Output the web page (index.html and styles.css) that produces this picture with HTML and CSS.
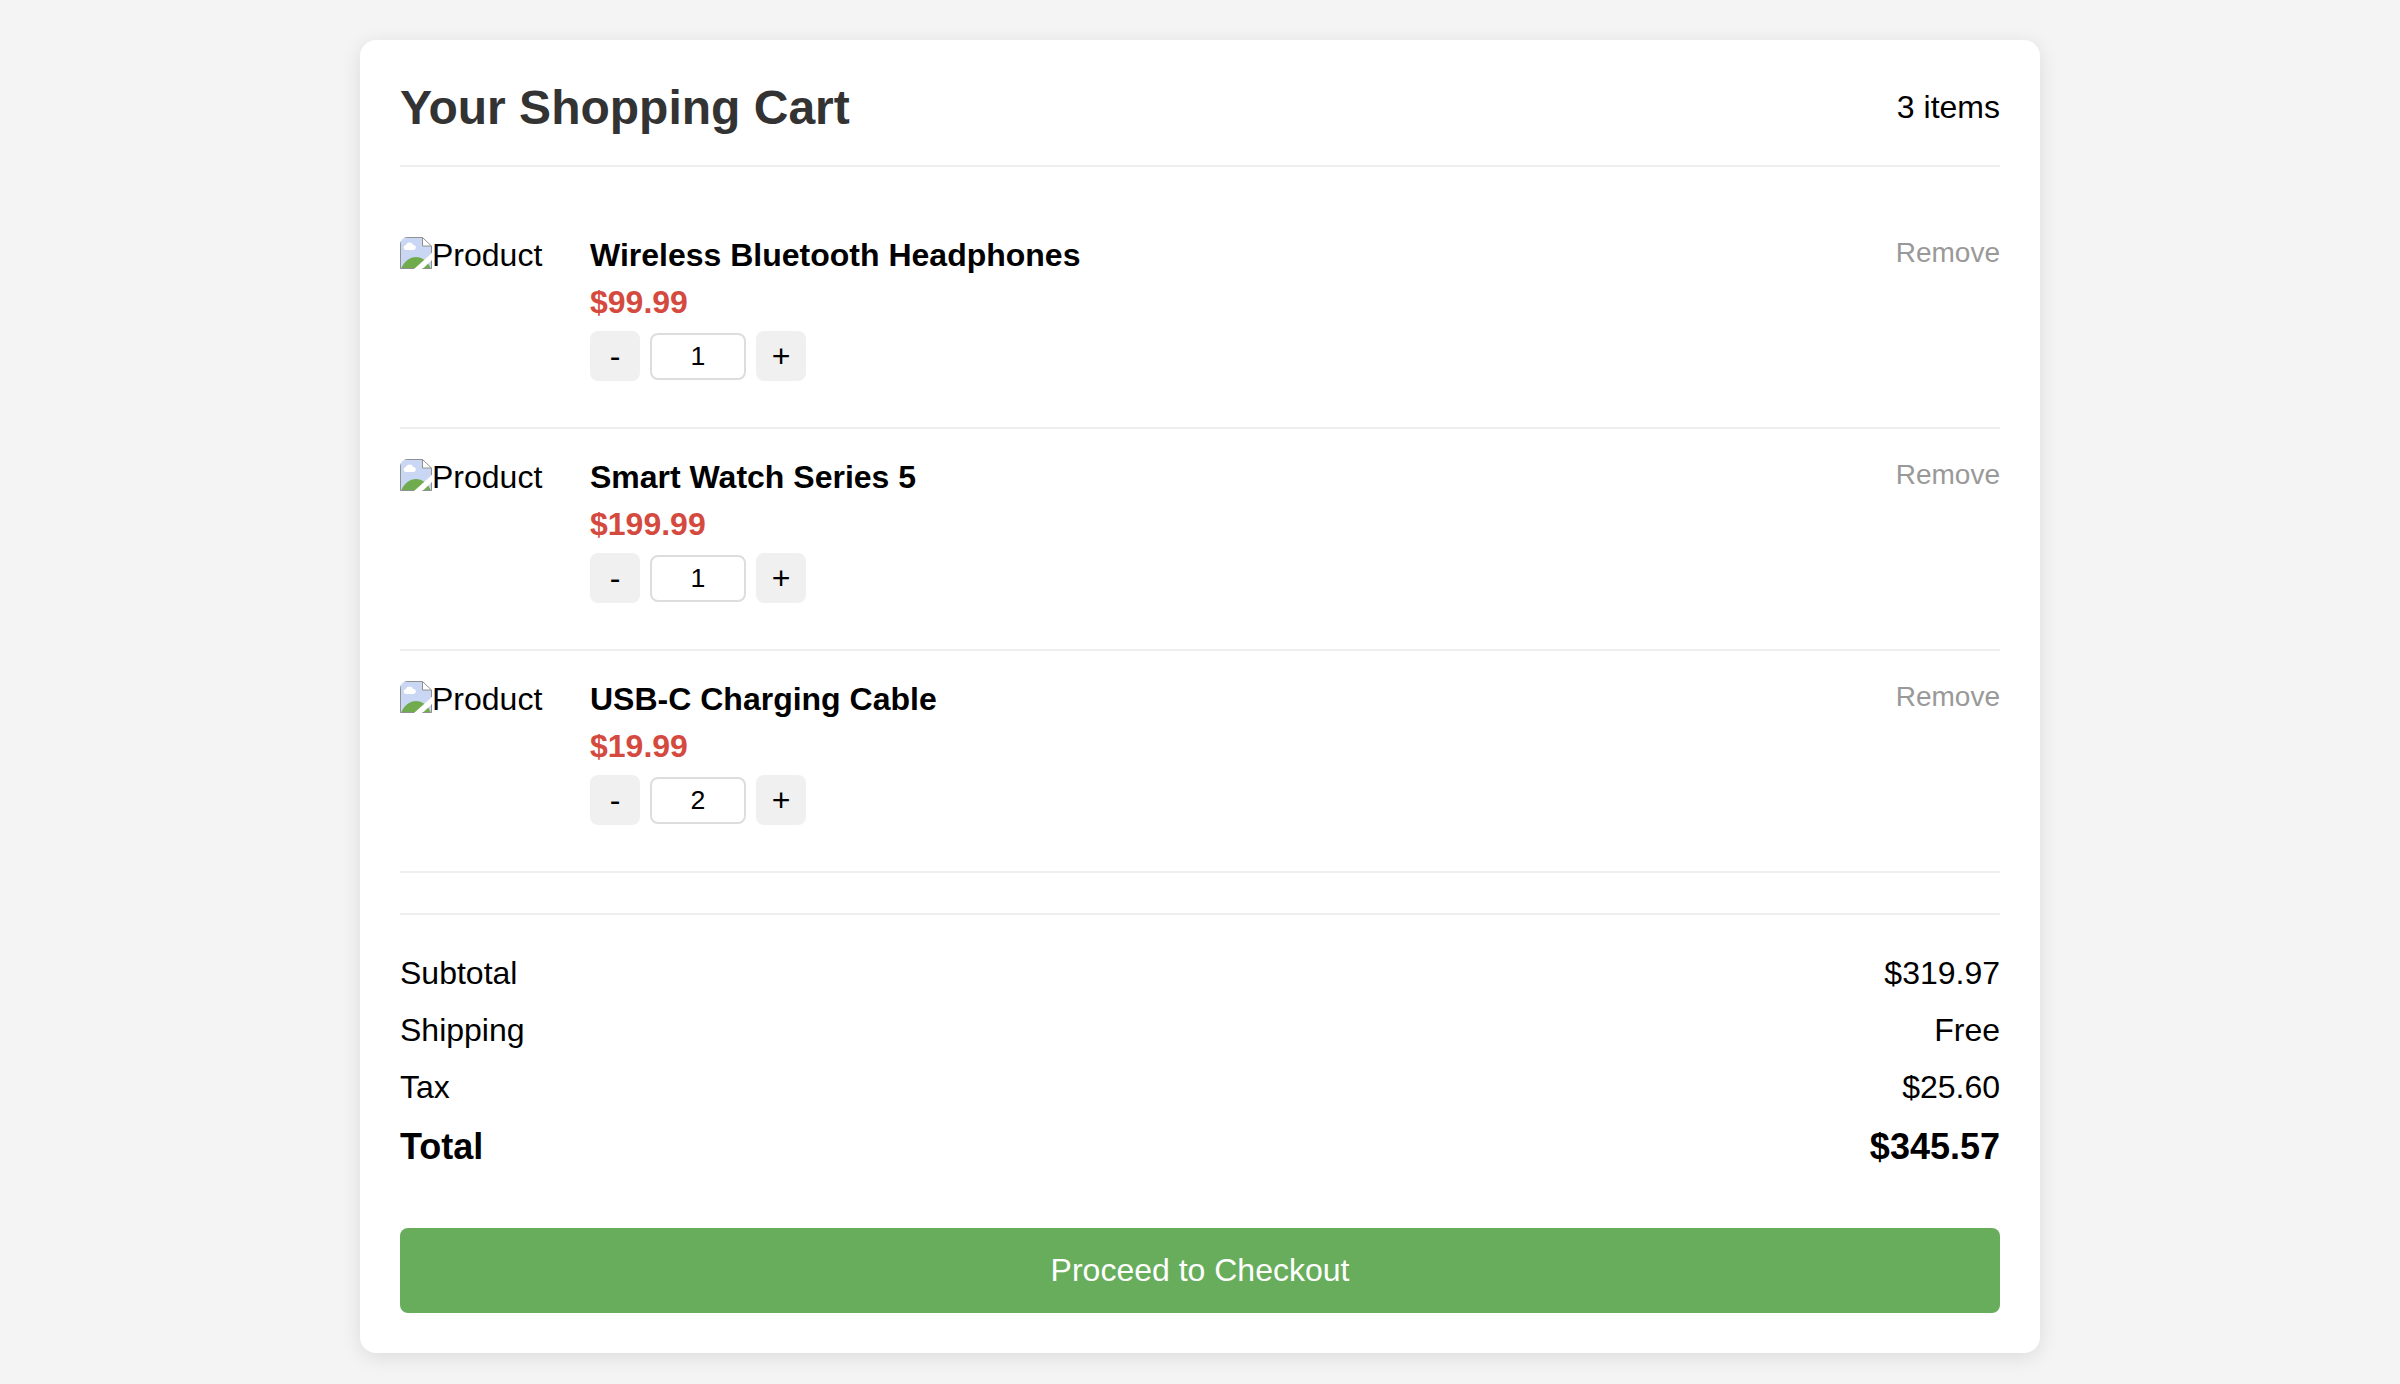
FILE: index.html
```html
<!DOCTYPE html>
<html lang="en">
<head>
<meta charset="utf-8">
<title>Your Shopping Cart</title>
<link rel="stylesheet" href="styles.css">
</head>
<body>
<svg class="sprite" aria-hidden="true">
  <symbol id="picture" viewBox="0 0 32 32">
    <path d="M0 0H22L32 10V32H0Z" fill="#c9d7f4"/>
    <path d="M5.500 13a2.600 2.600 0 0 1 .4-5.100a4 4 0 0 1 7.300 0a2.600 2.600 0 0 1 .8 5.100Z" fill="#fff"/>
    <path d="M1 32C4 24 10 20 16 20C22 20 28 24 31 32Z" fill="#70ac4d"/>
    <path d="M32 16V23L22.500 32H14Z" fill="#fff"/>
    <path d="M22.500 .5V9H31.500Z" fill="#fff"/>
    <path d="M14 31.500H.5V.5H22.500L31.500 9V16M22.500 .5V9H31.500M31.500 23.500V31.500H22.500" fill="none" stroke="#909090"/>
  </symbol>
</svg>
<main class="cart">
  <header class="cart-header">
    <h1>Your Shopping Cart</h1>
    <span>3 items</span>
  </header>
  <section class="items">
    <article class="item">
      <div class="thumb"><svg class="icon"><use href="#picture"/></svg><span>Product</span></div>
      <div class="details">
        <div class="name">Wireless Bluetooth Headphones</div>
        <div class="price">$99.99</div>
        <div class="quantity"><button class="step">-</button><input class="count" type="text" value="1"><button class="step">+</button></div>
      </div>
      <div class="remove">Remove</div>
    </article>
    <article class="item">
      <div class="thumb"><svg class="icon"><use href="#picture"/></svg><span>Product</span></div>
      <div class="details">
        <div class="name">Smart Watch Series 5</div>
        <div class="price">$199.99</div>
        <div class="quantity"><button class="step">-</button><input class="count" type="text" value="1"><button class="step">+</button></div>
      </div>
      <div class="remove">Remove</div>
    </article>
    <article class="item">
      <div class="thumb"><svg class="icon"><use href="#picture"/></svg><span>Product</span></div>
      <div class="details">
        <div class="name">USB-C Charging Cable</div>
        <div class="price">$19.99</div>
        <div class="quantity"><button class="step">-</button><input class="count" type="text" value="2"><button class="step">+</button></div>
      </div>
      <div class="remove">Remove</div>
    </article>
  </section>
  <section class="summary">
    <div class="row"><span>Subtotal</span><span>$319.97</span></div>
    <div class="row"><span>Shipping</span><span>Free</span></div>
    <div class="row"><span>Tax</span><span>$25.60</span></div>
    <div class="row total"><span>Total</span><span>$345.57</span></div>
  </section>
  <button class="checkout">Proceed to Checkout</button>
</main>
</body>
</html>
```
FILE: styles.css
```css
* {
  box-sizing: border-box;
}

body {
  min-height: 100vh;
  margin: 0;
  padding-top: 40px;
  background: #f4f4f4;
  color: #000;
  font: 32px/37px "Liberation Sans", Arial, sans-serif;
}

button,
input {
  margin: 0;
  color: #000;
  font: inherit;
}

.sprite {
  display: none;
}

.cart {
  width: 1680px;
  margin: 0 auto;
  padding: 40px;
  border-radius: 16px;
  background: #fff;
  box-shadow: 0 4px 20px rgba(0, 0, 0, 0.1);
}

.cart-header {
  display: flex;
  justify-content: space-between;
  align-items: center;
  margin-bottom: 40px;
  padding-bottom: 30px;
  border-bottom: 2px solid #eee;
}

h1 {
  margin: 0;
  color: #333;
  font-size: 48px;
  line-height: 55px;
}

.item {
  display: flex;
  gap: 30px;
  height: 222px;
  padding: 30px 0;
  border-bottom: 2px solid #eee;
}

.thumb {
  display: flex;
  width: 160px;
  height: 160px;
  border-radius: 8px;
  overflow: hidden;
}

.icon {
  flex: none;
  width: 32px;
  height: 32px;
}

.details {
  display: flex;
  flex: 1;
  flex-direction: column;
  gap: 10px;
  font-weight: bold;
}

.price {
  color: #d44a3f;
}

.quantity {
  display: flex;
  align-items: center;
  gap: 10px;
  font-weight: normal;
}

.step {
  width: 50px;
  height: 50px;
  padding: 0;
  border: 0;
  border-radius: 8px;
  background: #f0f0f0;
}

.count {
  width: 96px;
  height: 47px;
  padding: 0;
  border: 2px solid #ddd;
  border-radius: 8px;
  background: #fff;
  font-size: 26.667px;
  text-align: center;
}

.remove {
  color: #999;
  font-size: 28px;
  line-height: 32px;
}

.summary {
  display: flex;
  flex-direction: column;
  gap: 20px;
  margin-top: 40px;
  padding: 40px 0 20px;
  border-top: 2px solid #eee;
}

.row {
  display: flex;
  justify-content: space-between;
}

.total {
  font-size: 36px;
  font-weight: bold;
  line-height: 41px;
}

.checkout {
  display: block;
  width: 100%;
  height: 85px;
  margin-top: 41px;
  padding: 0;
  border: 0;
  border-radius: 8px;
  background: #68ad5c;
  color: #fff;
}
```
